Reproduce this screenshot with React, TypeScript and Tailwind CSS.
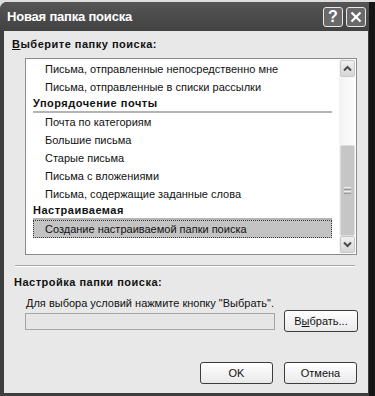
import React from 'react';

const font = { fontFamily: '"Liberation Sans", Arial, sans-serif' };

function Row({ text, selected }: { text: string; selected?: boolean }) {
  if (selected) {
    return (
      <div className="mx-[7px] h-[18px] flex items-center pl-[11px] bg-[#c3c3c3] border border-dotted border-[#3a3a3a] text-[#111]">
        {text}
      </div>
    );
  }
  return <div className="h-[18px] flex items-center pl-[19px] text-[#111]">{text}</div>;
}

function Header({ text }: { text: string }) {
  return (
    <div className="mx-[7px] h-[17px] border-b-2 border-[#b4b4b4] font-bold tracking-[0.5px] text-[#111] leading-[15px]">
      {text}
    </div>
  );
}

function Chevron({ up }: { up?: boolean }) {
  return (
    <svg width="9" height="7" viewBox="0 0 9 7">
      <polyline
        points={up ? '1,5.5 4.5,2 8,5.5' : '1,1.5 4.5,5 8,1.5'}
        fill="none"
        stroke="#4a4a4a"
        strokeWidth="2"
      />
    </svg>
  );
}

function ScrollBar() {
  return (
    <div className="w-[17px] flex flex-col bg-gradient-to-r from-[#f2f2f2] to-[#fdfdfd]">
      <div className="h-[17px] mt-[1px] mx-[1px] rounded-[2px] border border-[#c9c9c9] bg-gradient-to-b from-[#f0f0f0] to-[#d6d6d6] flex items-center justify-center">
        <Chevron up />
      </div>
      <div className="h-[68px]" />
      <div className="h-[91px] mx-[1px] rounded-[2px] border border-[#dcdcdc] bg-[#c6c6c6] flex flex-col items-center justify-center gap-[1px]">
        <div className="w-[7px] h-[1px] bg-[#efefef]" />
        <div className="w-[7px] h-[1px] bg-[#9a9a9a]" />
        <div className="w-[7px] h-[1px] bg-[#efefef]" />
        <div className="w-[7px] h-[1px] bg-[#9a9a9a]" />
      </div>
      <div className="flex-1" />
      <div className="h-[17px] mb-[1px] mx-[1px] rounded-[2px] border border-[#c9c9c9] bg-gradient-to-b from-[#f0f0f0] to-[#d6d6d6] flex items-center justify-center">
        <Chevron />
      </div>
    </div>
  );
}

function XpButton({ children, className }: { children: React.ReactNode; className?: string }) {
  return (
    <div
      className={`h-[22px] rounded-[3px] border border-[#3c3c3c] bg-gradient-to-b from-[#ffffff] to-[#e9e9e9] flex items-center justify-center text-[#111] ${className ?? ''}`}
    >
      {children}
    </div>
  );
}

export default function App() {
  return (
    <div className="w-[375px] h-[396px] bg-[#dedede] pt-[2px] text-[11px]" style={font}>
      <div className="h-[394px] flex flex-col bg-[#3e3e3e] rounded-tl-[7px] border-r-[6px] border-r-[#151515]">
        {/* title bar */}
        <div className="h-[29px] flex items-center justify-between pl-[7px] pr-[3px] bg-gradient-to-b from-[#555555] to-[#424242] rounded-tl-[7px]">
          <span className="text-white font-bold text-[13px] tracking-[-0.2px]">Новая папка поиска</span>
          <div className="flex gap-[3px]">
            <div className="w-[20px] h-[20px] rounded-[3px] border border-[#e8e8e8] bg-[#696969] flex items-center justify-center text-white font-bold text-[16px] leading-none">
              ?
            </div>
            <div className="w-[20px] h-[20px] rounded-[3px] border border-[#e8e8e8] bg-[#696969] flex items-center justify-center">
              <svg width="12" height="12" viewBox="0 0 12 12">
                <path d="M1.5 1.5 L10.5 10.5 M10.5 1.5 L1.5 10.5" stroke="#fff" strokeWidth="2.2" />
              </svg>
            </div>
          </div>
        </div>

        {/* body */}
        <div className="flex-1 ml-[4px] mr-[1px] mb-[3px] bg-[#e8e8e8] flex flex-col">
          <div className="h-[27px] flex items-center pl-[8px] font-bold tracking-[0.5px] text-[#111]">
            <span>
              <span className="underline">В</span>ыберите папку поиска:
            </span>
          </div>

          <div className="ml-[21px] w-[332px] h-[197px] border border-[#8c8c8c] bg-white flex">
            <div className="flex-1 pt-[1px]">
              <Row text="Письма, отправленные непосредственно мне" />
              <Row text="Письма, отправленные в списки рассылки" />
              <Header text="Упорядочение почты" />
              <Row text="Почта по категориям" />
              <Row text="Большие письма" />
              <Row text="Старые письма" />
              <Row text="Письма с вложениями" />
              <Row text="Письма, содержащие заданные слова" />
              <Header text="Настраиваемая" />
              <Row text="Создание настраиваемой папки поиска" selected />
            </div>
            <ScrollBar />
          </div>

          <div className="mt-[10px] ml-[11px] w-[340px] border-t border-[#a8a8a8] border-b border-b-white" />

          <div className="h-[30px] flex items-center pl-[10px] font-bold tracking-[0.5px] text-[#111]">
            Настройка папки поиска:
          </div>
          <div className="h-[12px] flex items-center pl-[22px] text-[#111]">
            Для выбора условий нажмите кнопку "Выбрать".
          </div>

          <div className="flex items-center mt-[1px]">
            <div className="ml-[21px] w-[250px] h-[17px] border border-[#a6a6a6] bg-[#e6e6e6]" />
            <XpButton className="ml-[9px] w-[74px]">
              <span>
                В<span className="underline">ы</span>брать...
              </span>
            </XpButton>
          </div>

          <div className="flex-1" />

          <div className="flex mb-[9px]">
            <XpButton className="ml-[196px] w-[73px]">OK</XpButton>
            <XpButton className="ml-[11px] w-[73px]">Отмена</XpButton>
          </div>
        </div>
      </div>
    </div>
  );
}
